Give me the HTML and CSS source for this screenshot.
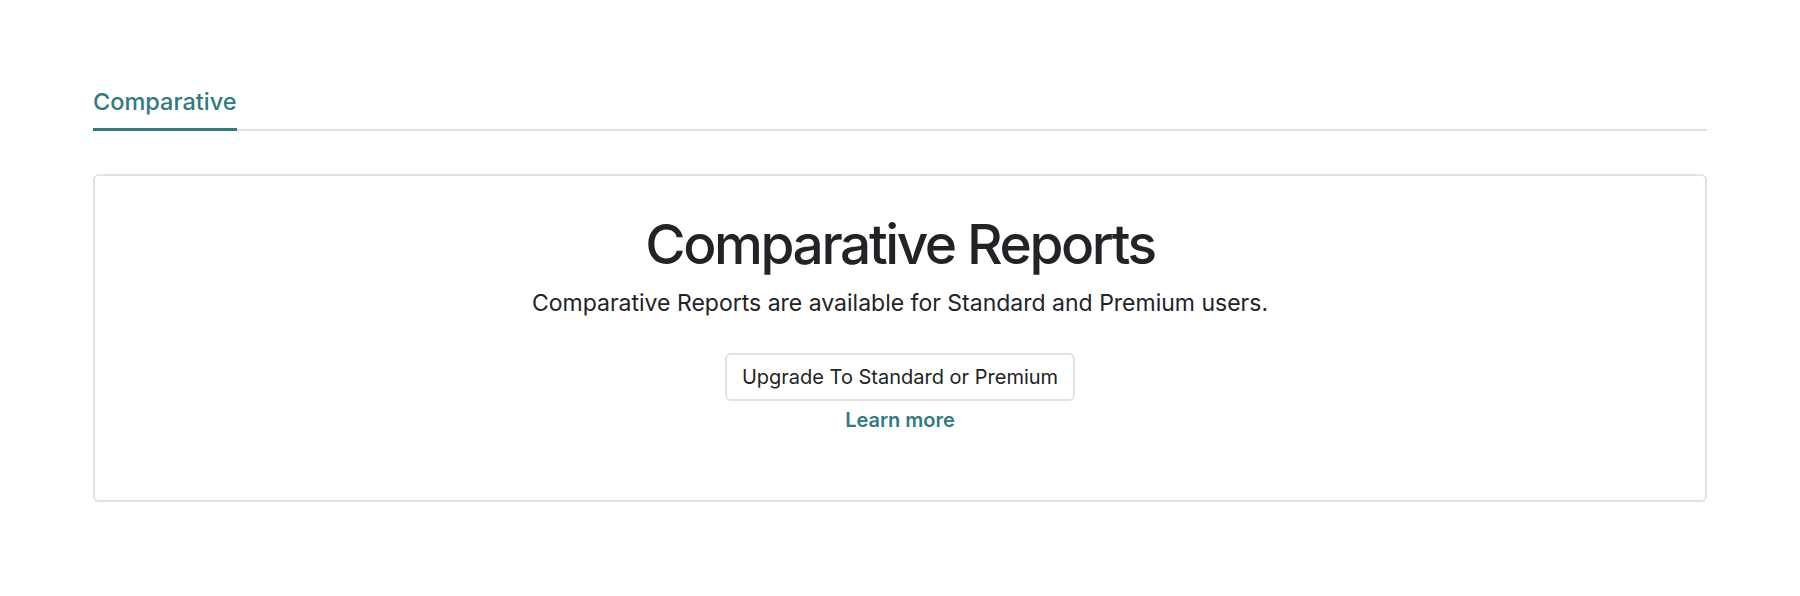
FILE: index.html
```html
<!DOCTYPE html>
<html lang="en">
<head>
<meta charset="utf-8">
<title>Comparative</title>
<link rel="stylesheet" href="styles.css">
</head>
<body>
<div class="page">
  <nav class="tabs">
    <a class="tab tab-active" href="#">Comparative</a>
  </nav>
  <section class="card">
    <h1 class="card-title">Comparative Reports</h1>
    <p class="card-text">Comparative Reports are available for Standard and Premium users.</p>
    <div class="actions">
      <button class="btn" type="button">Upgrade To Standard or Premium</button>
      <a class="link" href="#">Learn more</a>
    </div>
  </section>
</div>
</body>
</html>
```
FILE: styles.css
```css
* { box-sizing: border-box; }
html, body { margin: 0; padding: 0; background: #fff; }
body {
  font-family: Inter, "Noto Sans", "Liberation Sans", sans-serif;
  color: #222326;
}
.page {
  padding: 87px 93px 0;
}
.tabs {
  display: flex;
  border-bottom: 2px solid #e1e1e1;
}
.tab {
  display: block;
  font-size: 23.5px;
  font-weight: 500;
  line-height: 30px;
  color: #2f7b81;
  text-decoration: none;
  padding-bottom: 11px;
  border-bottom: 3px solid #2f7b81;
  margin-bottom: -2px;
}
.card {
  margin-top: 43px;
  height: 328px;
  border: 2px solid #e2e2e2;
  border-radius: 6px;
  text-align: center;
  padding-top: 36px;
}
.card-title {
  margin: 0;
  font-size: 55px;
  font-weight: 500;
  line-height: 64px;
  letter-spacing: -2.4px;
  color: #222326;
}
.card-text {
  margin: 11px 0 0;
  font-size: 23px;
  line-height: 32px;
  font-weight: 400;
}
.actions {
  margin-top: 34px;
  display: flex;
  flex-direction: column;
  align-items: center;
}
.btn {
  font-family: inherit;
  font-size: 20px;
  line-height: 28px;
  color: #222326;
  background: #fff;
  border: 2px solid #e0e2e5;
  border-radius: 6px;
  padding: 8px 15px;
  cursor: pointer;
}
.link {
  margin-top: 5px;
  font-size: 20px;
  line-height: 28px;
  font-weight: 600;
  color: #2f7b81;
  text-decoration: none;
}
```
